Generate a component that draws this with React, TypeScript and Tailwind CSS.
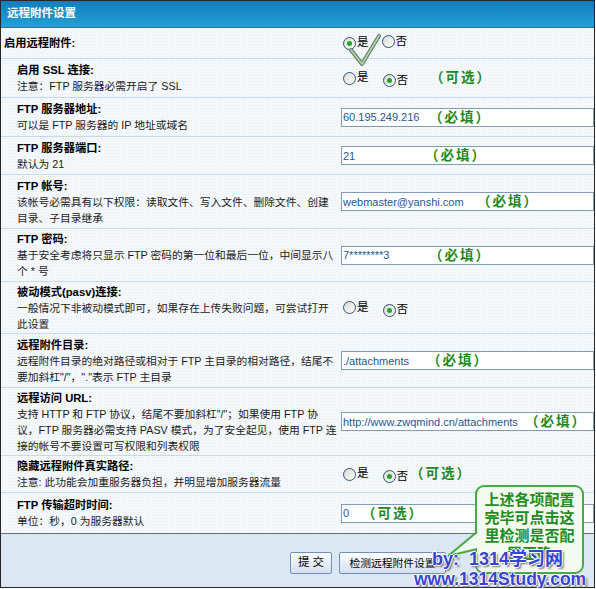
import React from 'react';

type Row = {
  label: string;
  desc: string[];
  h: string;
  right: React.ReactNode;
  first?: boolean;
  last?: boolean;
};

const Radio = ({ checked, label }: { checked?: boolean; label: string }) => (
  <span className="inline-flex items-center">
    <span className="flex h-[13px] w-[13px] items-center justify-center rounded-full border border-[#2d5478] bg-linear-to-br from-[#d8d8d2] to-white">
      {checked && <span className="h-[5px] w-[5px] rounded-full bg-[#22a522]" />}
    </span>
    <span className="ml-[1px] text-[11.5px] leading-none text-black">{label}</span>
  </span>
);

const Note = ({ text, className = '' }: { text: string; className?: string }) => (
  <span className={`text-[13.5px] font-bold leading-none tracking-[2px] text-[#1b8a1b] ${className}`}>{text}</span>
);

const Field = ({ value, note, noteLeft }: { value: string; note?: string; noteLeft?: string }) => (
  <div className="relative flex-1">
    <input
      readOnly
      value={value}
      className="block h-[19px] w-full border border-[#7f9db9] bg-white pl-[1px] text-[11px] leading-[17px] text-[#1d568f] outline-none font-['Liberation_Sans',sans-serif]"
    />
    {note && <Note text={note} className={`absolute top-[3px] ${noteLeft}`} />}
  </div>
);

const rows: Row[] = [
  {
    label: '启用远程附件:',
    desc: [],
    h: 'h-[31px]',
    first: true,
    right: (
      <div className="relative flex items-center pl-[2px]">
        <Radio checked label="是" />
        <span className="ml-[13px]">
          <Radio label="否" />
        </span>
        <svg className="absolute left-[7px] top-[1px] z-10" width="34" height="34" viewBox="0 0 34 34">
          <polyline points="3,18 14,32 31,4" fill="none" stroke="#6d7d70" strokeWidth="4" strokeLinejoin="round" strokeLinecap="round" />
          <polyline points="3,18 14,32 31,4" fill="none" stroke="#a9dca9" strokeWidth="1.6" strokeLinejoin="round" strokeLinecap="round" />
        </svg>
      </div>
    ),
  },
  {
    label: '启用 SSL 连接:',
    desc: ['注意：FTP 服务器必需开启了 SSL'],
    h: 'h-[39px]',
    right: (
      <div className="flex items-center pl-[2px]">
        <Radio label="是" />
        <span className="ml-[14px]">
          <Radio checked label="否" />
        </span>
        <Note text="（可选）" className="ml-[22px]" />
      </div>
    ),
  },
  {
    label: 'FTP 服务器地址:',
    desc: ['可以是 FTP 服务器的 IP 地址或域名'],
    h: 'h-[39px]',
    right: <Field value="60.195.249.216" note="（必填）" noteLeft="left-[88px]" />,
  },
  {
    label: 'FTP 服务器端口:',
    desc: ['默认为 21'],
    h: 'h-[38px]',
    right: <Field value="21" note="（必填）" noteLeft="left-[84px]" />,
  },
  {
    label: 'FTP 帐号:',
    desc: ['该帐号必需具有以下权限：读取文件、写入文件、删除文件、创建', '目录、子目录继承'],
    h: 'h-[54px]',
    right: <Field value="webmaster@yanshi.com" note="（必填）" noteLeft="left-[136px]" />,
  },
  {
    label: 'FTP 密码:',
    desc: ['基于安全考虑将只显示 FTP 密码的第一位和最后一位，中间显示八', '个 * 号'],
    h: 'h-[53px]',
    right: <Field value="7********3" note="（必填）" noteLeft="left-[88px]" />,
  },
  {
    label: '被动模式(pasv)连接:',
    desc: ['一般情况下非被动模式即可，如果存在上传失败问题，可尝试打开', '此设置'],
    h: 'h-[52px]',
    right: (
      <div className="flex items-center pl-[2px]">
        <Radio label="是" />
        <span className="ml-[14px]">
          <Radio checked label="否" />
        </span>
      </div>
    ),
  },
  {
    label: '远程附件目录:',
    desc: ['远程附件目录的绝对路径或相对于 FTP 主目录的相对路径，结尾不', '要加斜杠"/"，"."表示 FTP 主目录'],
    h: 'h-[54px]',
    right: <Field value="./attachments" note="（必填）" noteLeft="left-[86px]" />,
  },
  {
    label: '远程访问 URL:',
    desc: [
      '支持 HTTP 和 FTP 协议，结尾不要加斜杠"/"；如果使用 FTP 协',
      '议，FTP 服务器必需支持 PASV 模式，为了安全起见，使用 FTP 连',
      '接的帐号不要设置可写权限和列表权限',
    ],
    h: 'h-[68px]',
    right: <Field value="http://www.zwqmind.cn/attachments" note="（必填）" noteLeft="left-[184px]" />,
  },
  {
    label: '隐藏远程附件真实路径:',
    desc: ['注意: 此功能会加重服务器负担，并明显增加服务器流量'],
    h: 'h-[37px]',
    right: (
      <div className="flex items-center pl-[2px]">
        <Radio label="是" />
        <span className="ml-[14px]">
          <Radio checked label="否" />
        </span>
        <Note text="（可选）" className="ml-[2px]" />
      </div>
    ),
  },
  {
    label: 'FTP 传输超时时间:',
    desc: ['单位：秒，0 为服务器默认'],
    h: 'h-[40px]',
    last: true,
    right: <Field value="0" note="（可选）" noteLeft="left-[21px]" />,
  },
];

export default function App() {
  return (
    <div className="relative w-[595px] border border-[#262626] bg-[#f4f8fb] font-['Liberation_Sans','Noto_Sans_CJK_SC',sans-serif]">
      <div className="flex h-[27px] items-center border-b border-[#3f6a88] bg-linear-to-b from-[#157db9] via-[#1a8fc7] to-[#1fa2d8] pl-[6px]">
        <span className="text-[11.5px] font-bold text-white">远程附件设置</span>
      </div>

      {rows.map((row) => (
        <div
          key={row.label}
          className={`flex ${row.h} ${row.last ? '' : 'border-b border-[#c6daec]'} bg-[radial-gradient(circle,#e6edf3_0.7px,transparent_0.9px)] bg-[length:3px_3px]`}
        >
          <div className={`flex w-[334px] shrink-0 flex-col justify-center ${row.first ? 'pl-[3px]' : 'pl-[16px]'}`}>
            <div className="whitespace-nowrap text-[11.25px] font-bold leading-[16px] text-black">{row.label}</div>
            {row.desc.map((line) => (
              <div key={line} className="whitespace-nowrap text-[10.75px] leading-[16px] text-[#1a1a1a]">
                {line}
              </div>
            ))}
          </div>
          <div className="flex flex-1 items-center pl-[6px]">{row.right}</div>
        </div>
      ))}

      <div className="flex h-[54px] gap-[7px] border-t border-[#6e6e6e] bg-[#dbe7f3] pl-[289px] pt-[18px]">
        <button className="h-[22px] w-[42px] rounded-[2px] border border-[#6f8fb8] bg-linear-to-b from-white to-[#d2dfee] text-[11.5px] text-black">
          提 交
        </button>
        <button className="h-[22px] w-[107px] rounded-[2px] border border-[#6f8fb8] bg-linear-to-b from-white to-[#d2dfee] text-[10.75px] text-black">
          检测远程附件设置
        </button>
      </div>

      <div className="absolute left-[474px] top-[484px] h-[89px] w-[109px] rounded-[9px] border-2 border-[#46aa46] bg-[#f3fbf1] pt-[4px] text-center text-[15px] font-bold leading-[18px] text-[#228b22]">
        上述各项配置
        <br />
        完毕可点击这
        <br />
        里检测是否配
        <br />
        置正确
      </div>
      <svg className="absolute left-[443px] top-[525px]" width="38" height="34" viewBox="0 0 38 34">
        <polygon points="36,5 4,30 36,23" fill="#f3fbf1" />
        <polyline points="33,6 4,30 33,23" fill="none" stroke="#46aa46" strokeWidth="2" />
      </svg>

      <div className="pointer-events-none absolute left-[431px] top-[547px] whitespace-pre text-[18px] font-bold leading-[22px] text-[#3544d2] [text-shadow:1px_0_0_#fff,-1px_0_0_#fff,0_1px_0_#fff,0_-1px_0_#fff,2px_2px_2px_#777]">
        by:  1314学习网
      </div>
      <div className="pointer-events-none absolute left-[413px] top-[567px] whitespace-pre text-[17.5px] font-bold leading-[22px] text-[#3544d2] [text-shadow:1px_0_0_#fff,-1px_0_0_#fff,0_1px_0_#fff,0_-1px_0_#fff,2px_2px_2px_#777]">
        www.1314Study.com
      </div>
    </div>
  );
}
